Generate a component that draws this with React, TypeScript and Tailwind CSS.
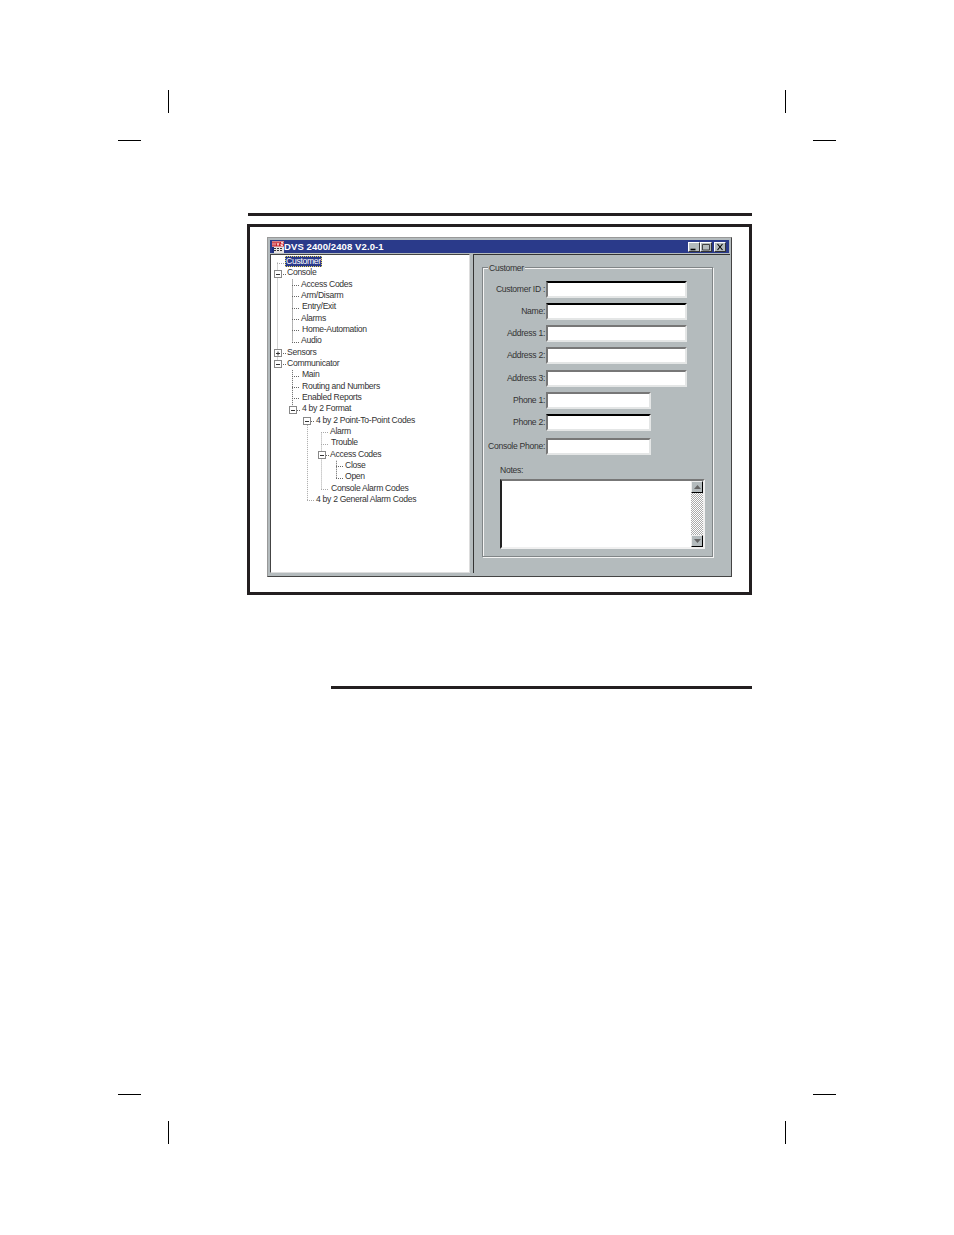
const font = "font-['Liberation_Sans',Arial,sans-serif]";
const label = "text-[8.6px] tracking-[-0.3px] text-[#333]";

const tree = [
  { label: "Customer", x: 285, selected: true },
  { label: "Console", x: 287, box: 274, open: true },
  { label: "Access Codes", x: 301 },
  { label: "Arm/Disarm", x: 301 },
  { label: "Entry/Exit", x: 302 },
  { label: "Alarms", x: 301 },
  { label: "Home-Automation", x: 302 },
  { label: "Audio", x: 301 },
  { label: "Sensors", x: 287, box: 274 },
  { label: "Communicator", x: 287, box: 274, open: true },
  { label: "Main", x: 302 },
  { label: "Routing and Numbers", x: 302 },
  { label: "Enabled Reports", x: 302 },
  { label: "4 by 2 Format", x: 302, box: 289, open: true },
  { label: "4 by 2 Point-To-Point Codes", x: 316, box: 303, open: true },
  { label: "Alarm", x: 330 },
  { label: "Trouble", x: 331 },
  { label: "Access Codes", x: 330, box: 318, open: true },
  { label: "Close", x: 345 },
  { label: "Open", x: 345 },
  { label: "Console Alarm Codes", x: 331 },
  { label: "4 by 2 General Alarm Codes", x: 316 },
];

const fields = [
  { label: "Customer ID :", wide: true, top: "border-t-black", gap: "mt-0" },
  { label: "Name:", wide: true, top: "border-t-black", gap: "mt-[5px]" },
  { label: "Address 1:", wide: true, top: "border-t-[#222]", gap: "mt-[5px]" },
  { label: "Address 2:", wide: true, top: "border-t-[#111]", gap: "mt-[5px]" },
  { label: "Address 3:", wide: true, top: "border-t-[#555]", gap: "mt-[6px]" },
  { label: "Phone 1:", wide: false, top: "border-t-[#777]", gap: "mt-[5px]" },
  { label: "Phone 2:", wide: false, top: "border-t-black", gap: "mt-[5px]" },
  { label: "Console Phone:", wide: false, top: "border-t-[#777]", gap: "mt-[7px]" },
];

// crop marks around the page
function Crop({ className }: { className: string }) {
  return <div className={`absolute bg-black ${className}`} />;
}

// dotted tree connectors + expander boxes
function TreeLines() {
  const rowY = (i: number) => 261.5 + i * 11.33;
  const v = (x: number, a: number, b: number) => `M${x + 0.5} ${rowY(a)}V${rowY(b)}`;
  const h = (x: number, i: number, to: number) => `M${x} ${Math.round(rowY(i)) + 0.5}H${to}`;
  const light =
    v(277, 0, 9) + v(307, 14, 21) + v(321, 15, 20) +
    h(277, 0, 285) + h(321, 15, 329) + h(321, 16, 329) + h(321, 20, 329) + h(307, 21, 315);
  const dark =
    v(292, 1.5, 7) + v(292, 9.5, 13) + v(336, 17.5, 19) +
    h(292, 2, 300) + h(292, 3, 300) + h(292, 4, 300) + h(292, 5, 300) + h(292, 6, 300) + h(292, 7, 300) +
    h(292, 10, 300) + h(292, 11, 300) + h(292, 12, 300) + h(336, 18, 344) + h(336, 19, 344) +
    h(283, 1, 286) + h(283, 8, 286) + h(283, 9, 286) + h(297, 13, 300) + h(311, 14, 315) + h(326, 17, 329);
  return (
    <svg className="absolute left-[-271px] top-[-254px] pointer-events-none" width="954" height="600" fill="none">
      <path d={light} stroke="#a8a8a8" strokeWidth="1" strokeDasharray="1 1" />
      <path d={dark} stroke="#666" strokeWidth="1" strokeDasharray="1 1" />
      {tree.map((r, i) =>
        r.box ? (
          <g key={i}>
            <rect x={r.box + 0.5} y={Math.round(rowY(i)) - 3.5} width="7" height="7" fill="#fff" stroke="#888" />
            <path d={`M${r.box + 2} ${Math.round(rowY(i)) + 0.5}h4`} stroke="#333" />
            {!r.open && <path d={`M${r.box + 4} ${Math.round(rowY(i)) - 1.5}v4`} stroke="#333" />}
          </g>
        ) : null
      )}
    </svg>
  );
}

function WinButton({ kind, className }: { kind: "min" | "max" | "close"; className?: string }) {
  return (
    <div className={`w-[12px] h-[10px] bg-[#b4bbbd] border border-t-white border-l-white border-r-[#333] border-b-[#333] flex items-center justify-center ${className ?? ""}`}>
      <svg width="10" height="8" viewBox="0 0 10 8" fill="none">
        {kind === "min" && <path d="M1.5 6.5h5" stroke="#000" strokeWidth="1.6" />}
        {kind === "max" && <path d="M1.5 1.5h7v5.5h-7z" stroke="#444" />}
        {kind === "close" && <path d="M2.5 1l5 6M7.5 1l-5 6" stroke="#000" strokeWidth="1.1" />}
      </svg>
    </div>
  );
}

function AppIcon() {
  return (
    <svg width="12" height="12" viewBox="0 0 12 12" className="shrink-0">
      <rect width="12" height="12" fill="#e8e4e4" />
      <rect y="0.5" width="12" height="5" fill="#c8202a" />
      <path d="M1 1.5v3M3 1.5v3M5 1.5l1 3 1-3M9 1.5h2v1.5h-2v1.5h2" stroke="#fff" strokeWidth="0.8" fill="none" />
      <path d="M2 7.5h9M2 9.5h9" stroke="#333" strokeWidth="1" strokeDasharray="2 1" />
      <rect y="6" width="2" height="6" fill="#1c2f80" />
    </svg>
  );
}

function ScrollArrow({ up }: { up: boolean }) {
  return (
    <div className="h-[12px] bg-[#b4bbbd] border border-t-[#eee] border-l-[#eee] border-r-black border-b-black flex items-center justify-center">
      <svg width="7" height="4" viewBox="0 0 7 4">
        <path d={up ? "M3.5 0L7 4H0z" : "M0 0h7L3.5 4z"} fill="#666" />
      </svg>
    </div>
  );
}

export default function App() {
  return (
    <div className={`relative w-[954px] h-[1235px] bg-white overflow-hidden pt-[213px] ${font}`}>
      <Crop className="left-[168px] top-[90px] w-px h-[23px]" />
      <Crop className="left-[785px] top-[90px] w-px h-[23px]" />
      <Crop className="left-[118px] top-[140px] w-[23px] h-px" />
      <Crop className="left-[813px] top-[140px] w-[23px] h-px" />
      <Crop className="left-[118px] top-[1094px] w-[23px] h-px" />
      <Crop className="left-[813px] top-[1094px] w-[23px] h-px" />
      <Crop className="left-[168px] top-[1121px] w-px h-[23px]" />
      <Crop className="left-[785px] top-[1121px] w-px h-[23px]" />

      <div className="ml-[248px] w-[504px] h-[3px] bg-[#231f20]" />

      <div className="ml-[247px] mt-[8px] w-[505px] h-[371px] border-[3px] border-[#231f20] bg-white pt-[10px] pl-[17px]">
        {/* window */}
        <div className="w-[465px] h-[340px] bg-[#b4bbbd] border border-t-[#999] border-l-[#999] border-r-[#444] border-b-[#444] p-px flex flex-col">
          <div className="h-[13px] mt-px mx-px bg-[#2a3a8a] flex items-center pl-[2px] pr-[3px]">
            <AppIcon />
            <span className="text-[9.5px] leading-none font-bold text-white tracking-[0.1px] whitespace-nowrap">DVS 2400/2408 V2.0-1</span>
            <div className="ml-auto flex items-center">
              <WinButton kind="min" />
              <WinButton kind="max" />
              <WinButton kind="close" className="ml-[2px]" />
            </div>
          </div>

          <div className="flex flex-1 mt-px pb-[2px] pl-px">
            {/* tree pane */}
            <div className="relative w-[200px] bg-white border border-t-[#444] border-l-[#444] border-r-[#ddd] border-b-[#ddd] pt-[1px]">
              <TreeLines />
              {tree.map((r) => (
                <div key={r.label + r.x} className="relative h-[11.33px]">
                  <span
                    className={
                      r.selected
                        ? "absolute top-0 text-[8.6px] tracking-[-0.3px] leading-[9px] whitespace-nowrap bg-[#2a3a8a] text-white border border-dotted border-[#e8d860]"
                        : `absolute top-0 leading-[11px] whitespace-nowrap ${label}`
                    }
                    style={{ left: r.x - 271 }}
                  >
                    {r.label}
                  </span>
                </div>
              ))}
            </div>

            {/* form pane */}
            <div className="flex-1 ml-[3px] border-l border-t border-l-[#333] border-t-[#333] pt-[12px] pl-[8px]">
              <div className="relative w-[231px] h-[290px] border border-[#808587] shadow-[inset_1px_1px_0_#f4f4f4,1px_1px_0_#f4f4f4] pt-[13px]">
                <span className={`absolute left-[5px] top-[-5px] bg-[#b4bbbd] px-[1px] leading-[10px] ${label}`}>Customer</span>
                {fields.map((f) => (
                  <div key={f.label} className={`flex items-center h-[17px] ${f.gap}`}>
                    <span className={`w-[62px] text-right leading-none whitespace-nowrap ${label}`}>{f.label}</span>
                    <div className={`ml-[1px] h-full bg-white border-[2px] border-t-[#777] border-l-[#777] border-r-[#e4e6e6] border-b-[#e4e6e6] ${f.top} ${f.wide ? "w-[141px]" : "w-[105px]"}`} />
                  </div>
                ))}
                <div className={`ml-[17px] mt-[10px] leading-[10px] ${label}`}>Notes:</div>
                <div className="ml-[17px] mt-[4px] w-[205px] h-[70px] bg-white border-[2px] border-t-[#777] border-l-[#222] border-r-[#f0f0f0] border-b-[#f0f0f0] flex justify-end">
                  <div className="w-[12px] flex flex-col">
                    <ScrollArrow up />
                    <div className="flex-1 bg-[repeating-conic-gradient(#aaa_0_25%,#fff_0_50%)] bg-[length:2px_2px]" />
                    <ScrollArrow up={false} />
                  </div>
                </div>
              </div>
            </div>
          </div>
        </div>
      </div>

      <div className="ml-[331px] mt-[91px] w-[421px] h-[3px] bg-[#231f20]" />
    </div>
  );
}
